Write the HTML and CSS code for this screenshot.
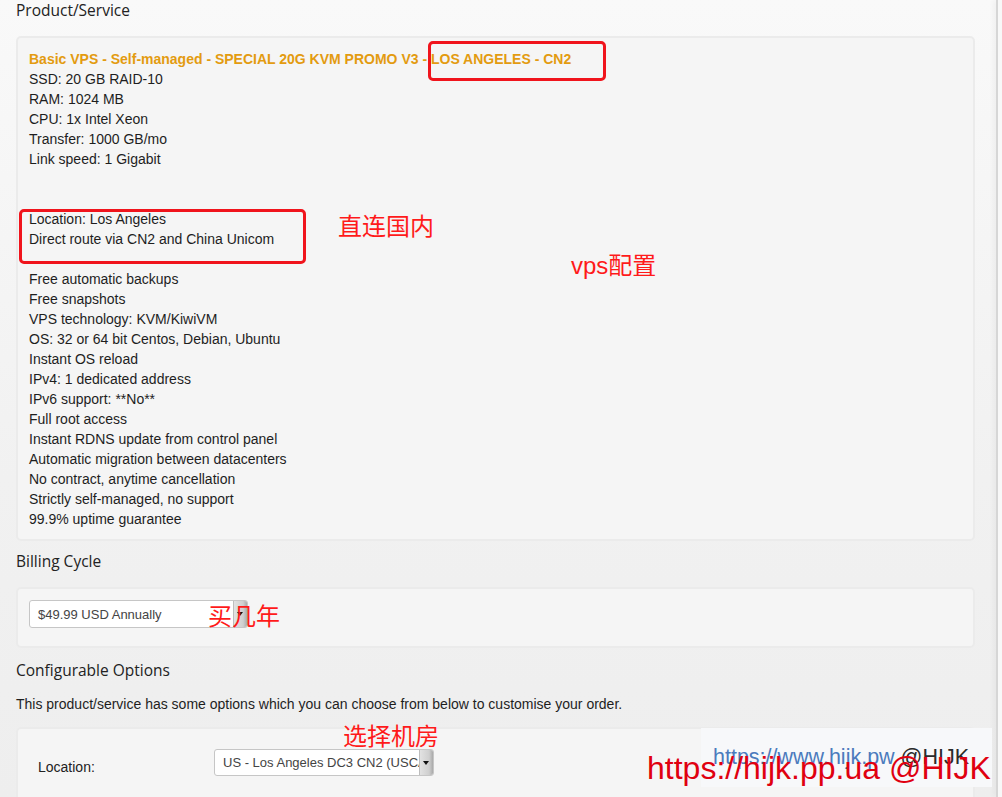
FILE: index.html
```html
<!DOCTYPE html>
<html lang="en">
<head>
<meta charset="utf-8">
<title>Product/Service</title>
<link rel="stylesheet" href="styles.css">
</head>
<body>
<div class="page">
  <main class="main">
    <h2 class="heading">Product/Service</h2>
    <div class="panel product">
      <div class="product-name">Basic VPS - Self-managed - SPECIAL 20G KVM PROMO V3 - LOS ANGELES - CN2</div>
      <div>SSD: 20 GB RAID-10</div>
      <div>RAM: 1024 MB</div>
      <div>CPU: 1x Intel Xeon</div>
      <div>Transfer: 1000 GB/mo</div>
      <div>Link speed: 1 Gigabit</div>
      <div class="blank"></div>
      <div class="blank"></div>
      <div>Location: Los Angeles</div>
      <div>Direct route via CN2 and China Unicom</div>
      <div class="blank"></div>
      <div>Free automatic backups</div>
      <div>Free snapshots</div>
      <div>VPS technology: KVM/KiwiVM</div>
      <div>OS: 32 or 64 bit Centos, Debian, Ubuntu</div>
      <div>Instant OS reload</div>
      <div>IPv4: 1 dedicated address</div>
      <div>IPv6 support: **No**</div>
      <div>Full root access</div>
      <div>Instant RDNS update from control panel</div>
      <div>Automatic migration between datacenters</div>
      <div>No contract, anytime cancellation</div>
      <div>Strictly self-managed, no support</div>
      <div>99.9% uptime guarantee</div>
    </div>

    <h2 class="heading heading-billing">Billing Cycle</h2>
    <div class="panel billing">
      <div class="select select-billing">
        <span class="select-text">$49.99 USD Annually</span>
        <span class="select-arrow"></span>
      </div>
    </div>

    <h2 class="heading heading-config">Configurable Options</h2>
    <p class="intro">This product/service has some options which you can choose from below to customise your order.</p>
    <div class="panel options">
      <div class="option-row">
        <span class="option-label">Location:</span>
        <div class="select select-location">
          <span class="select-text">US - Los Angeles DC3 CN2 (USCA_9)</span>
          <span class="select-arrow"></span>
        </div>
      </div>
    </div>
  </main>
  <div class="edge"></div>

  <div class="mark mark-1"></div>
  <div class="mark mark-2"></div>
  <div class="note note-direct">直连国内</div>
  <div class="note note-vps">vps配置</div>
  <div class="note note-years">买几年</div>
  <div class="note note-room">选择机房</div>

  <div class="watermark"><span class="wm-link">https://www.hijk.pw</span> <span class="wm-at">@HIJK</span></div>
  <div class="red-watermark">https://hijk.pp.ua @HIJK</div>
</div>
</body>
</html>
```

FILE: styles.css
```css
html, body {
  margin: 0;
  padding: 0;
}

body {
  background: #efefef;
  font-family: "Liberation Sans", Arial, sans-serif;
  color: #1e1e1e;
}

.page {
  position: relative;
  width: 1002px;
  height: 797px;
  overflow: hidden;
  display: flex;
  background: linear-gradient(to bottom, #f9f9f9 0%, #f1f1f1 60%, #eeeeee 100%);
}

.main {
  flex: 1;
  padding: 0 21px 0 16px;
  min-width: 0;
}

.edge {
  width: 4px;
  border-left: 2px solid #d6d6d6;
  background: #f8f8f8;
  box-shadow: -3px 0 5px rgba(0, 0, 0, 0.04);
}

.heading {
  margin: 0 0 16px;
  font-family: "Open Sans", "Noto Sans", sans-serif;
  font-weight: 400;
  font-size: 15.5px;
  line-height: 20px;
  color: #222;
}

.heading-billing {
  margin-top: 10px;
}

.heading-config {
  margin-top: 12px;
  margin-bottom: 14px;
}

.panel {
  background: #f5f5f5;
  border: 2px solid #ebebeb;
  border-radius: 5px;
}

.product {
  padding: 11px 11px 10px;
  font-size: 14px;
  line-height: 20px;
}

.product-name {
  font-weight: 700;
  color: #e39b10;
}

.blank {
  height: 20px;
}

.billing {
  padding: 11px 11px 18px;
}

.select {
  display: flex;
  align-items: stretch;
  background: #ffffff;
  border: 1px solid #c6c6c6;
  border-radius: 3px;
  box-sizing: border-box;
  overflow: hidden;
  font-size: 13px;
  color: #444;
}

.select-text {
  flex: 1;
  min-width: 0;
  white-space: nowrap;
  overflow: hidden;
  display: flex;
  align-items: center;
}

.select-arrow {
  position: relative;
  width: 13px;
  flex: none;
  background: linear-gradient(to right, #e2e2e2, #cfcfcf 70%, #a9a9a9);
  border-left: 1px solid #bdbdbd;
}

.select-arrow::after {
  content: "";
  position: absolute;
  left: 3px;
  top: 50%;
  margin-top: -2px;
  border-left: 3.5px solid transparent;
  border-right: 3.5px solid transparent;
  border-top: 4px solid #111;
}

.select-billing {
  width: 219px;
  height: 28px;
}

.select-billing .select-text {
  padding-left: 8px;
}

.intro {
  margin: 0 0 13px;
  font-size: 14px;
  line-height: 20px;
  color: #1e1e1e;
}

.options {
  height: 120px;
  padding: 20px 20px 0;
}

.option-row {
  display: grid;
  grid-template-columns: 176px auto;
  align-items: center;
}

.option-label {
  font-size: 14px;
  color: #222;
  padding-top: 8px;
}

.select-location {
  width: 220px;
  height: 27px;
}

.select-location .select-text {
  padding-left: 8px;
}

/* Red annotations drawn over the page */
.mark {
  position: absolute;
  border: 3px solid #f0141c;
  border-radius: 5px;
  box-sizing: border-box;
}

.mark-1 {
  left: 428px;
  top: 41px;
  width: 178px;
  height: 40px;
}

.mark-2 {
  left: 19px;
  top: 209px;
  width: 287px;
  height: 55px;
}

.note {
  position: absolute;
  font-family: "Liberation Sans", "Noto Sans CJK SC", sans-serif;
  font-size: 24px;
  line-height: 24px;
  color: #ff1a1a;
  white-space: nowrap;
}

.note-direct {
  left: 338px;
  top: 215px;
}

.note-vps {
  left: 571px;
  top: 254px;
}

.note-years {
  left: 208px;
  top: 605px;
}

.note-room {
  left: 343px;
  top: 725px;
}

.watermark {
  position: absolute;
  left: 701px;
  top: 728px;
  width: 291px;
  height: 59px;
  box-sizing: border-box;
  padding: 19px 0 0 12px;
  background: #f7f8fa;
  font-family: "Liberation Sans", Arial, sans-serif;
  font-size: 21.5px;
  line-height: 21.5px;
  white-space: nowrap;
}

.wm-link {
  color: #4b7bbd;
}

.wm-at {
  color: #2b2b2b;
}

.red-watermark {
  position: absolute;
  left: 647px;
  top: 752px;
  font-family: "Liberation Sans", Arial, sans-serif;
  font-size: 32px;
  line-height: 32px;
  color: #e00010;
  white-space: nowrap;
}
```
